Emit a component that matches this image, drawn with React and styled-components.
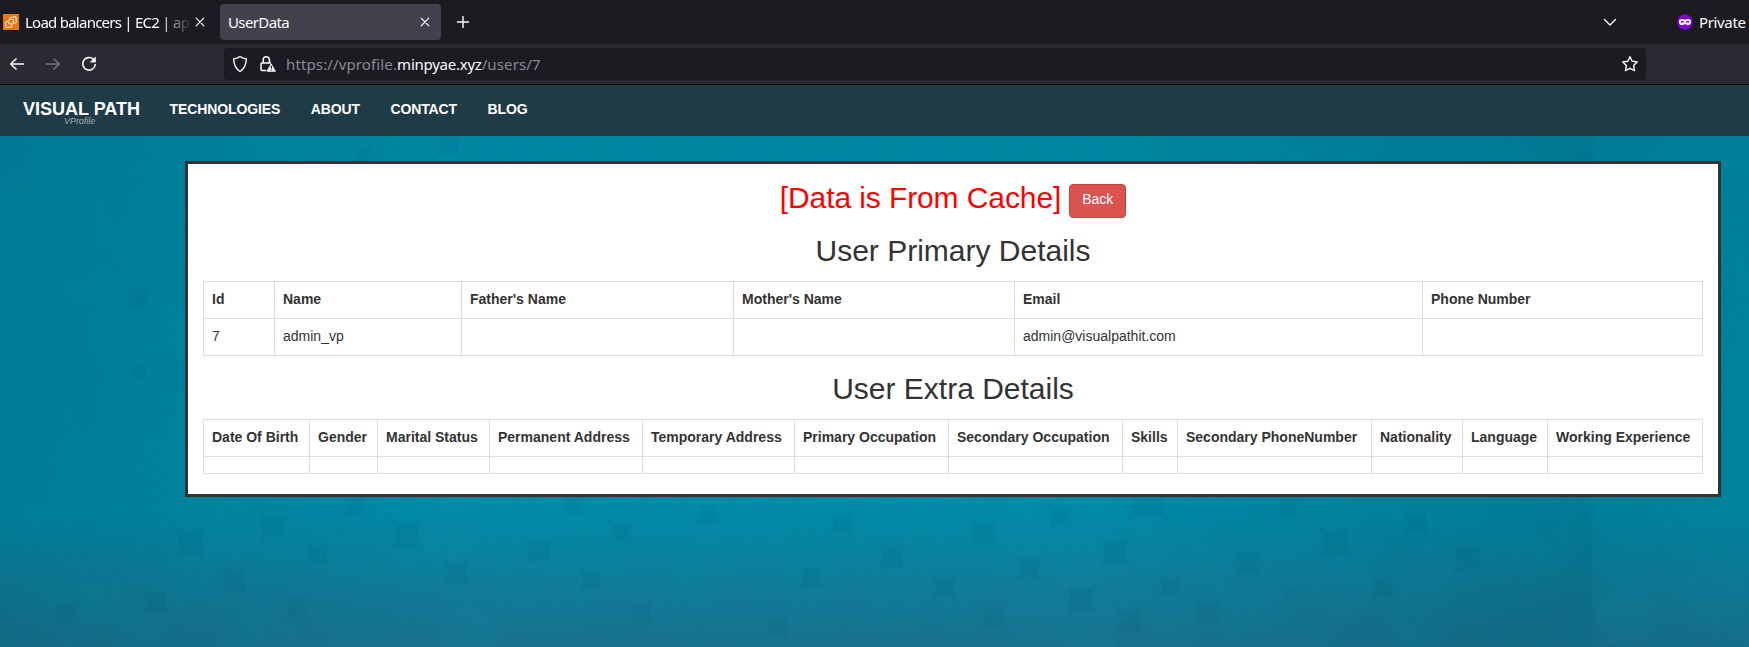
import React from 'react';
import styled, { createGlobalStyle } from 'styled-components';

const Global = createGlobalStyle`
  * { box-sizing: border-box; }
  body { margin: 0; font-family: "Liberation Sans", Arial, sans-serif; font-size: 14px; line-height: 20px; color: #333; overflow: hidden; }
`;

const Window = styled.div`
  height: 647px;
  display: flex;
  flex-direction: column;
  overflow: hidden;
`;

const TabBar = styled.div`
  height: 44px;
  flex: none;
  display: flex;
  align-items: center;
  background: #1c1b22;
  color: #fbfbfe;
  font: 15px/36px "Noto Sans", sans-serif;
`;

const Tab = styled.div`
  height: 36px;
  width: ${p => p.$width}px;
  padding: 0 8px 0 ${p => p.$pad}px;
  display: flex;
  align-items: center;
  border-radius: 4px;
  background: ${p => (p.$active ? '#42414d' : 'transparent')};
  margin-right: ${p => p.$gap || 0}px;
`;

const TabTitle = styled.div`
  flex: 1;
  min-width: 0;
  white-space: nowrap;
  letter-spacing: ${p => (p.$fade ? -0.75 : -0.62)}px;
  mask-image: ${p => (p.$fade ? 'linear-gradient(to left, transparent, #000 32px)' : 'none')};
`;

const Icon = styled.svg`
  flex: none;
  display: block;
  margin-left: ${p => p.$left || 0}px;
  margin-right: ${p => p.$right || 0}px;
  fill: none;
  stroke: ${p => p.$color || '#fbfbfe'};
  stroke-width: ${p => p.$weight || 1.4};
  stroke-linecap: round;
  stroke-linejoin: round;
`;

const TabTools = styled.div`
  flex: 1;
  display: flex;
  align-items: center;
  justify-content: space-between;
  padding-left: 14px;
`;

const PrivateGroup = styled.div`
  display: flex;
  align-items: center;
  width: 147px;
  white-space: nowrap;
  span { margin-left: 6px; letter-spacing: -0.35px; }
`;

const Toolbar = styled.div`
  height: 41px;
  flex: none;
  display: flex;
  align-items: center;
  padding: 0 103px 0 8px;
  background: #2b2a33;
  border-bottom: 1px solid #0c0c0d;
`;

const NavButtons = styled.div`
  width: 216px;
  display: flex;
  gap: 18px;
`;

const AddressBar = styled.div`
  flex: 1;
  height: 32px;
  border-radius: 4px;
  background: #1c1b22;
  display: flex;
  align-items: center;
  padding: 0 7px 0 8px;
`;

const Url = styled.div`
  flex: 1;
  margin-left: 9px;
  font: 15px/32px "Noto Sans", sans-serif;
  letter-spacing: 0.13px;
  color: #8b8a93;
  b { font-weight: 400; color: #fbfbfe; letter-spacing: -0.25px; }
`;

const SiteNav = styled.nav`
  height: 51px;
  flex: none;
  display: flex;
  background: #1e3b47;
  color: #fff;
  font-weight: 700;
  padding: 14px 0 0 23px;
`;

const Brand = styled.div`
  width: 146.500px;
  font-size: 18px;
  line-height: 20px;
  white-space: nowrap;
`;

const BrandSub = styled.div`
  margin: -3px 0 0 41px;
  font: italic 9px/10px "Liberation Sans", sans-serif;
  letter-spacing: -0.05px;
  color: #a3adb1;
`;

const NavLink = styled.a`
  margin-right: 30.500px;
  line-height: 20px;
  letter-spacing: -0.11px;
`;

const Page = styled.main`
  flex: 1;
  min-height: 0;
  position: relative;
  padding: 25px 28px 0 185px;
  background:
    linear-gradient(90deg, rgba(0, 70, 90, .22), rgba(0, 80, 100, .14) 12%, transparent 26%, transparent 62%, rgba(0, 70, 90, .26) 91%, rgba(0, 75, 95, .18) 91.1%, rgba(0, 80, 100, .14)),
    linear-gradient(180deg, #0088a4 0, #008ba9 74%, #0f7e9c 86%, #1b708d 100%);
`;

const Texture = styled.svg`
  position: absolute;
  inset: 0;
  width: 100%;
  height: 100%;
`;

const Panel = styled.section`
  position: relative;
  height: 336px;
  padding: 0 15px;
  display: flow-root;
  background: #fff;
  border: 3px solid #333;
`;

const Heading = styled.h2`
  height: ${p => (p.$tall ? 34 : 33)}px;
  margin: 20px 0 ${p => (p.$tall ? 20 : 10)}px;
  display: flex;
  justify-content: center;
  gap: 8px;
  font-weight: 400;
  font-size: 30px;
  letter-spacing: ${p => (p.$tall ? -0.1 : 0)}px;
  line-height: ${p => (p.$tall ? 28 : 25)}px;
  color: ${p => (p.$tall ? 'red' : '#333')};
`;

const BackButton = styled.button`
  width: 57px;
  height: 34px;
  padding: 0 0 4px;
  border: 1px solid #d43f3a;
  border-radius: 4px;
  background: #d9534f;
  color: #fff;
  font: 14px/20px "Liberation Sans", sans-serif;
`;

const Table = styled.table`
  table-layout: fixed;
  border-collapse: collapse;
  th, td {
    height: 37px;
    padding: 7px 8px 9px;
    border: 1px solid #ddd;
    text-align: left;
    vertical-align: top;
    white-space: nowrap;
    line-height: 20px;
  }
  td:empty { height: ${p => p.$emptyHeight || 37}px; }
`;

const PRIMARY = [['Id', 71], ['Name', 187], ["Father's Name", 272], ["Mother's Name", 281], ['Email', 408], ['Phone Number', 280]];
const EXTRA = [
  ['Date Of Birth', 106], ['Gender', 68], ['Marital Status', 112], ['Permanent Address', 153],
  ['Temporary Address', 152], ['Primary Occupation', 154], ['Secondary Occupation', 174], ['Skills', 55],
  ['Secondary PhoneNumber', 194], ['Nationality', 91], ['Language', 85], ['Working Experience', 155],
];

const DISCS = [
  [1021, 393, 29], [1072, 425, 29], [1123, 457, 29], [1205, 438, 30], [1038, 475, 30], [1257, 470, 29],
  [1173, 486, 26], [1090, 501, 28], [1095, 382, 23], [1294, 418, 33], [1342, 451, 31], [1150, 407, 24],
  [1456, 374, 30], [1425, 432, 28], [1626, 481, 30], [230, 395, 31], [450, 396, 31], [468, 500, 30], [1716, 456, 32],
];

const GAPS = [
  [1029, 432, 13], [1115, 417, 15], [1248, 426, 12], [1060, 381, 13], [1081, 464, 15], [1129, 484, 14],
  [1170, 451, 11], [1416, 387, 13], [1335, 407, 16], [1382, 451, 12], [1468, 424, 14], [1208, 477, 13],
  [190, 407, 16], [273, 391, 14], [407, 399, 16], [539, 414, 14], [621, 396, 13], [318, 419, 12],
  [234, 444, 14], [457, 437, 14], [811, 441, 12], [708, 379, 10], [842, 387, 12], [984, 397, 13],
  [892, 421, 14], [945, 452, 13], [777, 491, 12], [641, 477, 12], [993, 482, 12], [296, 472, 12],
  [591, 444, 11], [67, 477, 14], [156, 466, 13], [355, 370, 12], [574, 369, 12], [449, 8, 13],
  [362, 18, 10], [138, 162, 12], [140, 236, 9], [1148, 364, 22], [1289, 372, 11],
];

const star = ([x, y, r]) =>
  `M${x - r} ${y - r}q${r} ${r * 0.6} ${r * 2} 0q${-r * 0.6} ${r} 0 ${r * 2}q${-r} ${-r * 0.6} ${-r * 2} 0q${r * 0.6} ${-r} 0 ${-r * 2}z`;

const PageTexture = () => (
  <Texture aria-hidden="true">
    <filter id="grain" x="0" y="0" width="100%" height="100%">
      <feTurbulence type="fractalNoise" baseFrequency=".35" numOctaves="3" seed="4" />
      <feColorMatrix values="0 0 0 0 0  0 0 0 0 .2  0 0 0 0 .28  0 0 0 .22 -.04" />
    </filter>
    <filter id="clouds" x="0" y="0" width="100%" height="100%">
      <feTurbulence type="fractalNoise" baseFrequency=".018" numOctaves="3" seed="9" />
      <feColorMatrix values="0 0 0 0 0  0 0 0 0 .25  0 0 0 0 .35  .4 0 0 0 -.16" />
    </filter>
    <rect width="100%" height="100%" filter="url(#clouds)" />
    <g fill="#1fa0bd" fillOpacity=".06">
      {DISCS.map(([x, y, r]) => <circle key={`${x}-${y}`} cx={x} cy={y} r={r} />)}
    </g>
    <path d={GAPS.map(star).join('')} fill="#04506a" fillOpacity=".09" />
    <rect width="100%" height="100%" filter="url(#grain)" />
  </Texture>
);

const DataTable = ({ columns, row, emptyHeight }) => (
  <Table $emptyHeight={emptyHeight} style={{ width: columns.reduce((sum, [, w]) => sum + w, 1) }}>
    <colgroup>{columns.map(([n, w]) => <col key={n} width={w} />)}</colgroup>
    <thead><tr>{columns.map(([n]) => <th key={n}>{n}</th>)}</tr></thead>
    <tbody><tr>{columns.map(([n], i) => <td key={n}>{row[i]}</td>)}</tr></tbody>
  </Table>
);

const CloseIcon = () => (
  <Icon width="16" height="16" $weight={1.2}><path d="M4.200 4.200l7.600 7.600M11.800 4.200l-7.600 7.600" /></Icon>
);

export default function App() {
  return (
    <Window>
      <Global />
      <TabBar>
        <Tab $width={216} $pad={3} $gap={4}>
          <Icon width="16" height="16" $weight={0.9} $right={6}>
            <rect width="16" height="16" fill="#e8780c" stroke="none" />
            <rect x="5.800" y="5.300" width="4.600" height="4.600" rx=".6" />
            <path d="M4.500 7.500l-2 .6.500 5.400 5.500-.4.300-2M7 3.600l5.800-1 .6 6-1.900.6" />
          </Icon>
          <TabTitle $fade>Load balancers | EC2 | ap-</TabTitle>
          <CloseIcon />
        </Tab>
        <Tab $active $width={221} $pad={8}>
          <TabTitle>UserData</TabTitle>
          <CloseIcon />
        </Tab>
        <TabTools>
          <Icon width="16" height="16" $weight={1.4}><path d="M8 2.500v11M2.500 8h11" /></Icon>
          <PrivateGroup>
            <Icon width="16" height="16" $right={59}><path d="M2.500 5.500l5.500 5.500 5.500-5.500" /></Icon>
            <Icon width="16" height="16">
              <circle cx="8" cy="8" r="7.700" fill="#8000d7" stroke="none" />
              <path d="M8 6.300C7 4.700 1.900 4.400 1.900 7.400c0 4.700 4.700 4.400 6.100 2 1.400 2.400 6.100 2.700 6.100-2C14.100 4.400 9 4.700 8 6.300z" fill="#fff" stroke="none" />
              <path d="M4.400 7.900q1-1 2.100 0M9.500 7.900q1-1 2.100 0" stroke="#8000d7" />
            </Icon>
            <span>Private</span>
          </PrivateGroup>
        </TabTools>
      </TabBar>
      <Toolbar>
        <NavButtons>
          <Icon width="18" height="18" $weight={1.6}><path d="M15.500 9H3M8 4L2.700 9 8 14" /></Icon>
          <Icon width="18" height="18" $color="#77767e" $weight={1.6}><path d="M2.500 9H15M10 4l5.300 5L10 14" /></Icon>
          <Icon width="18" height="18" $weight={1.6}>
            <path d="M13.300 4.200A6.300 6.300 0 1 0 15.300 9.500" />
            <path d="M15.400 2.500v4.600h-4.600z" fill="#fbfbfe" strokeWidth=".8" />
          </Icon>
        </NavButtons>
        <AddressBar>
          <Icon width="16" height="18"><path d="M8 1.500c2 1.600 4 2.200 6.300 2.300 0 6-1.500 9.600-6.300 12.700C3.200 13.400 1.700 9.800 1.700 3.800 4 3.700 6 3.100 8 1.500z" /></Icon>
          <Icon width="18" height="18" $weight={1.5} $left={11}>
            <path d="M4.200 8V4.800a3.100 3.100 0 0 1 6.200 0V8M6.500 15.500H3a1 1 0 0 1-1-1V9a1 1 0 0 1 1-1h8.500" />
            <path d="M12.300 9.300l4 6.900h-8z" fill="#fbfbfe" strokeWidth="1" />
            <path d="M12.300 11.200v2M12.300 15v.1" stroke="#1c1b22" strokeWidth="1.200" />
          </Icon>
          <Url>https://vprofile.<b>minpyae.xyz</b>/users/7</Url>
          <Icon width="18" height="18" $weight={1.4}>
            <path d="M9 1.700l2.200 4.600 5 .6-3.600 3.600 1 5.200L9 13.300l-4.600 2.400 1-5.200-3.600-3.600 5-.6z" />
          </Icon>
        </AddressBar>
      </Toolbar>
      <SiteNav>
        <Brand>VISUAL PATH<BrandSub>VProfile</BrandSub></Brand>
        <NavLink>TECHNOLOGIES</NavLink>
        <NavLink>ABOUT</NavLink>
        <NavLink>CONTACT</NavLink>
        <NavLink>BLOG</NavLink>
      </SiteNav>
      <Page>
        <PageTexture />
        <Panel>
          <Heading $tall>[Data is From Cache]<BackButton>Back</BackButton></Heading>
          <Heading>User Primary Details</Heading>
          <DataTable columns={PRIMARY} row={['7', 'admin_vp', '', '', 'admin@visualpathit.com', '']} />
          <Heading>User Extra Details</Heading>
          <DataTable columns={EXTRA} row={[]} emptyHeight={17} />
        </Panel>
      </Page>
    </Window>
  );
}
